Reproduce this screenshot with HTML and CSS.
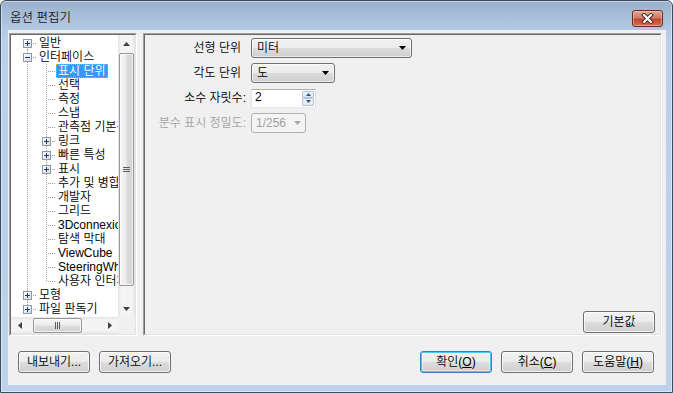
FILE: index.html
```html
<!DOCTYPE html>
<html lang="ko">
<head>
<meta charset="utf-8">
<title>옵션 편집기</title>
<link rel="stylesheet" href="styles.css">
</head>
<body>
<div class="window">
  <div class="titlebar">
    <span class="title">옵션 편집기</span>
    <div class="close">
      <svg width="13" height="11" viewBox="0 0 13 11">
        <path d="M3 2 L10 9 M10 2 L3 9" stroke="#5a2420" stroke-width="4" stroke-linecap="square" fill="none"/>
        <path d="M3 2 L10 9 M10 2 L3 9" stroke="#ffffff" stroke-width="2" stroke-linecap="square" fill="none"/>
      </svg>
    </div>
  </div>
  <div class="frame">
    <div class="client">
      <div class="main">
        <div class="tree sunken">
          <div class="sunken-in tree-grid">
            <ul class="rows">
              <li class="row"><span class="c vb h"><span class="box plus"></span></span><span class="lbl">일반</span></li>
              <li class="row"><span class="c v h"><span class="box"></span></span><span class="lbl">인터페이스</span></li>
              <li class="row"><span class="c v"></span><span class="c v h"></span><span class="lbl sel">표시 단위</span></li>
              <li class="row"><span class="c v"></span><span class="c v h"></span><span class="lbl">선택</span></li>
              <li class="row"><span class="c v"></span><span class="c v h"></span><span class="lbl">측정</span></li>
              <li class="row"><span class="c v"></span><span class="c v h"></span><span class="lbl">스냅</span></li>
              <li class="row"><span class="c v"></span><span class="c v h"></span><span class="lbl">관측점 기본값</span></li>
              <li class="row"><span class="c v"></span><span class="c v h"><span class="box plus"></span></span><span class="lbl">링크</span></li>
              <li class="row"><span class="c v"></span><span class="c v h"><span class="box plus"></span></span><span class="lbl">빠른 특성</span></li>
              <li class="row"><span class="c v"></span><span class="c v h"><span class="box plus"></span></span><span class="lbl">표시</span></li>
              <li class="row"><span class="c v"></span><span class="c v h"></span><span class="lbl">추가 및 병합</span></li>
              <li class="row"><span class="c v"></span><span class="c v h"></span><span class="lbl">개발자</span></li>
              <li class="row"><span class="c v"></span><span class="c v h"></span><span class="lbl">그리드</span></li>
              <li class="row"><span class="c v"></span><span class="c v h"></span><span class="lbl">3Dconnexion</span></li>
              <li class="row"><span class="c v"></span><span class="c v h"></span><span class="lbl">탐색 막대</span></li>
              <li class="row"><span class="c v"></span><span class="c v h"></span><span class="lbl">ViewCube</span></li>
              <li class="row"><span class="c v"></span><span class="c v h"></span><span class="lbl">SteeringWheels</span></li>
              <li class="row"><span class="c v"></span><span class="c vt h"></span><span class="lbl">사용자 인터페이스</span></li>
              <li class="row"><span class="c v h"><span class="box plus"></span></span><span class="lbl">모형</span></li>
              <li class="row"><span class="c vt h"><span class="box plus"></span></span><span class="lbl">파일 판독기</span></li>
            </ul>
            <div class="vscroll">
              <span class="arr"><svg width="7" height="4" viewBox="0 0 7 4"><polygon points="0,4 3.5,0 7,4" fill="#3f3f3f"/></svg></span>
              <div class="vtrack">
                <div class="vthumb">
                  <svg width="7" height="5" viewBox="0 0 7 5"><path d="M0 0.5H7M0 2.5H7M0 4.5H7" stroke="#5e5e5e" stroke-width="1"/></svg>
                </div>
              </div>
              <span class="arr"><svg width="7" height="4" viewBox="0 0 7 4"><polygon points="0,0 7,0 3.5,4" fill="#3f3f3f"/></svg></span>
            </div>
            <div class="hscroll">
              <span class="arr"><svg width="4" height="7" viewBox="0 0 4 7"><polygon points="4,0 4,7 0,3.5" fill="#3f3f3f"/></svg></span>
              <div class="htrack">
                <div class="hthumb">
                  <svg width="5" height="7" viewBox="0 0 5 7"><path d="M0.5 0V7M2.5 0V7M4.5 0V7" stroke="#5e5e5e" stroke-width="1"/></svg>
                </div>
              </div>
              <span class="arr"><svg width="4" height="7" viewBox="0 0 4 7"><polygon points="0,0 0,7 4,3.5" fill="#3f3f3f"/></svg></span>
            </div>
            <div class="corner"></div>
          </div>
        </div>
        <div class="panel sunken">
          <div class="sunken-in panel-in">
            <div class="form">
              <span class="flabel pad">선형 단위</span>
              <div class="combo w161"><span class="cval">미터</span><svg width="7" height="4" viewBox="0 0 7 4"><polygon points="0,0 7,0 3.5,4" fill="#000"/></svg></div>
              <span class="flabel pad">각도 단위</span>
              <div class="combo w84"><span class="cval">도</span><svg width="7" height="4" viewBox="0 0 7 4"><polygon points="0,0 7,0 3.5,4" fill="#000"/></svg></div>
              <span class="flabel">소수 자릿수:</span>
              <div class="spin">
                <span class="spin-val">2</span>
                <div class="spin-btns">
                  <span class="sb"><svg width="5" height="3" viewBox="0 0 5 3"><polygon points="0,3 2.5,0 5,3" fill="#30518a"/></svg></span>
                  <span class="sb"><svg width="5" height="3" viewBox="0 0 5 3"><polygon points="0,0 5,0 2.5,3" fill="#30518a"/></svg></span>
                </div>
              </div>
              <span class="flabel disabled">분수 표시 정밀도:</span>
              <div class="combo w55 dis"><span class="cval">1/256</span><svg width="7" height="4" viewBox="0 0 7 4"><polygon points="0,0 7,0 3.5,4" fill="#a8a8a8"/></svg></div>
            </div>
            <div class="panel-foot">
              <button class="btn">기본값</button>
            </div>
          </div>
        </div>
      </div>
      <div class="actions">
        <div class="group">
          <button class="btn">내보내기...</button>
          <button class="btn">가져오기...</button>
        </div>
        <div class="group">
          <button class="btn default">확인(<u>O</u>)</button>
          <button class="btn">취소(<u>C</u>)</button>
          <button class="btn">도움말(<u>H</u>)</button>
        </div>
      </div>
    </div>
  </div>
</div>
</body>
</html>
```
FILE: styles.css
```css
* { box-sizing: border-box; }
html, body { margin: 0; padding: 0; }
body {
  width: 673px;
  height: 393px;
  overflow: hidden;
  background: #ffffff;
  font-family: "Liberation Sans", "Noto Sans CJK KR", sans-serif;
  font-size: 12px;
  font-weight: 350;
  color: #000;
}
.window {
  width: 673px;
  height: 393px;
  border: 1px solid #3b4a5d;
  border-radius: 6px 6px 0 0;
  background: linear-gradient(to bottom, #9ab1cc 0px, #b4cae4 29px, #bad0ea 40px, #bdd3ec 100%);
  box-shadow: inset 0 0 0 1px rgba(255, 255, 255, 0.45);
  display: flex;
  flex-direction: column;
}
.titlebar {
  height: 29px;
  flex: none;
  display: flex;
  align-items: center;
  justify-content: space-between;
  padding: 5px 9px 0 9px;
}
.title {
  font-size: 12.5px;
  line-height: 15px;
  color: #1b1b1b;
}
.close {
  width: 31px;
  height: 17px;
  border: 1px solid #6a2925;
  border-radius: 3px;
  background: linear-gradient(to bottom, #e5a797 0%, #d27a66 45%, #c04a30 55%, #cf7058 100%);
  box-shadow: inset 0 0 0 1px rgba(255, 220, 210, 0.45);
  display: flex;
  align-items: center;
  justify-content: center;
}
.close svg { display: block; }
.frame {
  flex: 1;
  display: flex;
  padding: 0 6px 7px 7px;
}
.client {
  flex: 1;
  background: #f0f0f0;
  display: flex;
  flex-direction: column;
  padding: 3px 4px 0 1px;
}
.main {
  height: 303px;
  flex: none;
  display: flex;
  gap: 6px;
}
.sunken {
  border: 1px solid;
  border-color: #a0a0a0 #ffffff #ffffff #a0a0a0;
}
.sunken-in {
  height: 100%;
  border: 1px solid;
  border-color: #696969 #e3e3e3 #e3e3e3 #696969;
}
.tree { width: 128px; height: 303px; flex: none; }
.tree-grid {
  display: grid;
  grid-template-columns: 107px 17px;
  grid-template-rows: 282px 17px;
  background: #fff;
}
.rows {
  list-style: none;
  margin: 0;
  padding: 1px 0 0 7px;
  overflow: hidden;
}
.row {
  display: flex;
  height: 14px;
  white-space: nowrap;
}
.c {
  width: 19px;
  height: 14px;
  flex: none;
  position: relative;
}
.c.v::before, .c.vt::before, .c.vb::before {
  content: "";
  position: absolute;
  left: 9px;
  width: 1px;
  background: repeating-linear-gradient(to bottom, #a0a0a0 0 1px, transparent 1px 2px);
}
.c.v::before { top: 0; bottom: 0; }
.c.vt::before { top: 0; height: 8px; }
.c.vb::before { top: 7px; bottom: 0; }
.c.h::after {
  content: "";
  position: absolute;
  left: 10px;
  right: 0;
  top: 7px;
  height: 1px;
  background: repeating-linear-gradient(to right, transparent 0 1px, #a0a0a0 1px 2px);
}
.box {
  position: absolute;
  left: 5px;
  top: 3px;
  width: 9px;
  height: 9px;
  border: 1px solid #8f9aa8;
  background: linear-gradient(to bottom right, #ffffff, #d3d9e2);
  z-index: 1;
}
.box::before {
  content: "";
  position: absolute;
  left: 1px;
  top: 3px;
  width: 5px;
  height: 1px;
  background: #1d3a6b;
}
.box.plus::after {
  content: "";
  position: absolute;
  left: 3px;
  top: 1px;
  width: 1px;
  height: 5px;
  background: #1d3a6b;
}
.lbl {
  padding: 0 2px;
  height: 14px;
  line-height: 14px;
  font-size: 12px;
}
.lbl.sel {
  background: #3399ff;
  color: #fff;
  outline: 1px dotted #f0a53a;
  outline-offset: -1px;
}
.arr {
  width: 17px;
  height: 17px;
  flex: none;
  display: flex;
  align-items: center;
  justify-content: center;
}
.arr svg { display: block; }
.vscroll {
  display: flex;
  flex-direction: column;
  background: linear-gradient(to right, #e3e3e3, #f4f4f4 3px, #f4f4f4 14px, #e3e3e3);
}
.vtrack {
  flex: 1;
  padding: 1px 1px 0 1px;
}
.vthumb {
  height: 233px;
  border: 1px solid #979797;
  border-radius: 2px;
  background: linear-gradient(to right, #f6f6f6, #ececec 45%, #dcdcdc 55%, #d2d2d2);
  box-shadow: inset 0 0 0 1px rgba(255, 255, 255, 0.7);
  display: flex;
  align-items: center;
  justify-content: center;
}
.vthumb svg, .hthumb svg { display: block; }
.hscroll {
  display: flex;
  background: linear-gradient(to bottom, #e3e3e3, #f4f4f4 3px, #f4f4f4 14px, #e3e3e3);
}
.htrack {
  flex: 1;
  padding: 1px 0 1px 5px;
}
.hthumb {
  width: 49px;
  height: 15px;
  border: 1px solid #979797;
  border-radius: 2px;
  background: linear-gradient(to bottom, #f6f6f6, #ececec 45%, #dcdcdc 55%, #d2d2d2);
  box-shadow: inset 0 0 0 1px rgba(255, 255, 255, 0.7);
  display: flex;
  align-items: center;
  justify-content: center;
}
.corner { background: #f0f0f0; }
.panel { flex: 1; height: 303px; }
.panel-in {
  display: flex;
  flex-direction: column;
  justify-content: space-between;
  padding: 3px 5px 1px 0;
}
.form {
  display: grid;
  grid-template-columns: 101px auto;
  grid-auto-rows: 20px;
  column-gap: 5px;
  row-gap: 5px;
  justify-items: start;
  align-items: center;
}
.flabel {
  justify-self: end;
  line-height: 14px;
  white-space: nowrap;
}
.flabel.pad { padding-right: 5px; }
.flabel.disabled { color: #a3a3a3; }
.combo {
  height: 20px;
  display: flex;
  align-items: center;
  justify-content: space-between;
  padding: 0 5px 0 5px;
  border: 1px solid #707070;
  border-radius: 3px;
  background: linear-gradient(to bottom, #f2f2f2 0%, #ebebeb 50%, #dddddd 50%, #cfcfcf 100%);
  box-shadow: inset 0 0 0 1px rgba(255, 255, 255, 0.6);
}
.combo svg { display: block; }
.cval { line-height: 14px; }
.w161 { width: 161px; }
.w84 { width: 84px; }
.w55 { width: 55px; }
.combo.dis {
  border-color: #adb2b5;
  background: #f4f4f4;
  box-shadow: none;
  color: #a0a0a0;
  padding: 0 4px 0 4px;
}
.spin {
  width: 65px;
  height: 19px;
  display: flex;
  justify-content: space-between;
  border: 1px solid;
  border-color: #abadb3 #dbdfe6 #e3e9ef #e2e3ea;
  background: #fff;
}
.spin-val {
  padding: 1px 0 0 3px;
  line-height: 12px;
}
.spin-btns {
  width: 12px;
  display: flex;
  flex-direction: column;
  margin: 1px 1px 1px 0;
}
.sb {
  flex: 1;
  display: flex;
  align-items: center;
  justify-content: center;
  border: 1px solid #b5c3d3;
  border-radius: 1px;
  background: linear-gradient(to bottom, #f2f6fa, #dce6f0);
}
.sb svg { display: block; }
.panel-foot {
  display: flex;
  justify-content: flex-end;
}
.btn {
  width: 72px;
  height: 22px;
  padding: 0;
  border: 1px solid #707070;
  border-radius: 3px;
  background: linear-gradient(to bottom, #f2f2f2 0%, #ebebeb 50%, #dddddd 50%, #cfcfcf 100%);
  box-shadow: inset 0 0 0 1px rgba(255, 255, 255, 0.75);
  font-family: "Liberation Sans", "Noto Sans CJK KR", sans-serif;
  font-size: 12px;
  font-weight: 350;
  line-height: 14px;
  color: #000;
}
.btn u { text-decoration: underline; text-underline-offset: 1px; }
.btn.default {
  border-color: #3c7fb1;
  box-shadow: inset 0 0 0 1px #48c9f8, inset 0 0 0 2px rgba(255, 255, 255, 0.4);
}
.actions {
  display: flex;
  justify-content: space-between;
  margin-top: 15px;
  padding: 0 8px 0 9px;
}
.group {
  display: flex;
  gap: 9px;
}
```
